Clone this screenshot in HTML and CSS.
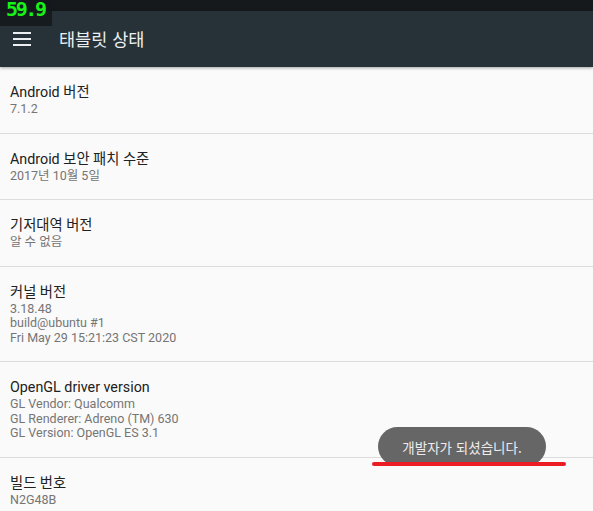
FILE: index.html
```html
<!DOCTYPE html>
<html lang="ko">
<head>
  <meta charset="UTF-8">
  <meta name="viewport" content="width=device-width, initial-scale=1.0">
  <title>태블릿 상태</title>
  <link rel="stylesheet" href="styles.css">
</head>
<body>
  <div class="statusbar"></div>
  <div class="fps">59.9</div>
  <header class="toolbar">
    <svg class="menu" width="18" height="14" viewBox="0 0 18 14">
      <rect x="0" y="0" width="18" height="2" fill="#eceff1"/>
      <rect x="0" y="6" width="18" height="2" fill="#eceff1"/>
      <rect x="0" y="12" width="18" height="2" fill="#eceff1"/>
    </svg>
    <h1>태블릿 상태</h1>
  </header>

  <ul class="list">
    <li>
      <div class="title">Android 버전</div>
      <div class="sub">7.1.2</div>
    </li>
    <li>
      <div class="title">Android 보안 패치 수준</div>
      <div class="sub">2017년 10월 5일</div>
    </li>
    <li>
      <div class="title">기저대역 버전</div>
      <div class="sub">알 수 없음</div>
    </li>
    <li>
      <div class="title">커널 버전</div>
      <div class="sub">3.18.48<br>build@ubuntu #1<br>Fri May 29 15:21:23 CST 2020</div>
    </li>
    <li>
      <div class="title">OpenGL driver version</div>
      <div class="sub">GL Vendor: Qualcomm<br>GL Renderer: Adreno (TM) 630<br>GL Version: OpenGL ES 3.1</div>
    </li>
    <li>
      <div class="title">빌드 번호</div>
      <div class="sub">N2G48B</div>
    </li>
  </ul>

  <div class="toast">개발자가 되셨습니다.</div>
  <div class="mark"></div>
</body>
</html>
```

FILE: styles.css
```css
html, body {
  margin: 0;
  height: 100%;
  overflow: hidden;
}
body {
  font-family: Roboto, "Noto Sans CJK KR", sans-serif;
  background: #fafafa;
  color: #212121;
  position: relative;
}
.statusbar {
  height: 11px;
  background: #15191c;
}
.fps {
  position: absolute;
  left: 0;
  top: 0;
  width: 52px;
  height: 26px;
  background: rgba(20, 24, 27, 0.85);
  color: #16f316;
  font-family: "DejaVu Sans Mono", monospace;
  font-weight: bold;
  font-size: 20px;
  letter-spacing: -2.4px;
  line-height: 18px;
  padding-left: 6px;
  box-sizing: border-box;
  z-index: 3;
}
.toolbar {
  height: 56px;
  background: #263238;
  display: flex;
  align-items: center;
  padding-left: 13px;
  box-shadow: 0 1px 3px rgba(0,0,0,0.35);
  position: relative;
  z-index: 2;
}
.toolbar .menu {
  margin-top: -1px;
}
.toolbar h1 {
  margin: -2px 0 0 28px;
  font-size: 17.5px;
  font-weight: normal;
  color: #eceff1;
  font-family: "Noto Sans CJK KR", Roboto, sans-serif;
}
.list {
  list-style: none;
  margin: 0;
  padding: 0;
}
.list li {
  padding: 16px 10px 16px;
  border-bottom: 1px solid #dcdcdc;
}
.title {
  font-size: 14.3px;
  line-height: 18px;
  margin-bottom: 1px;
}
.sub {
  font-size: 12.5px;
  line-height: 14.5px;
  color: #757575;
}
.toast {
  position: absolute;
  left: 378px;
  top: 427px;
  width: 168px;
  height: 39px;
  border-radius: 20px;
  background: #666666;
  color: #ededed;
  font-size: 13.5px;
  display: flex;
  align-items: center;
  justify-content: center;
  font-family: "Noto Sans CJK KR", Roboto, sans-serif;
}
.mark {
  position: absolute;
  left: 372px;
  top: 462px;
  width: 194px;
  height: 4px;
  border-radius: 2px;
  background: #ec1c24;
}
```
